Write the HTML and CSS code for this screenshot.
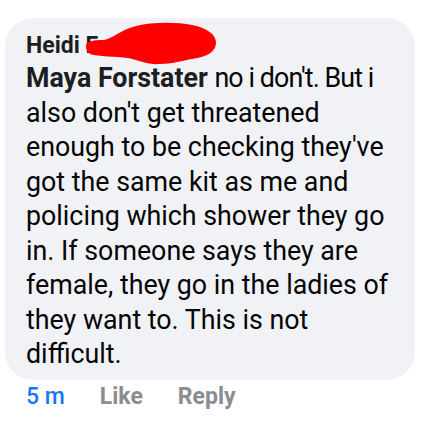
FILE: index.html
```html
<!DOCTYPE html>
<html>
<head>
<meta charset="utf-8">
<link rel="stylesheet" href="styles.css">
</head>
<body>
<div class="page">
  <div class="comment">
    <div class="bubble">
      <div class="name">Heidi F</div>
      <div class="text"><span class="mention">Maya Forstater</span> <span class="tight">no i don't. But i</span><br>also don't get threatened<br>enough to be checking they've<br>got the same kit as me and<br>policing which shower they go<br>in. If someone says they are<br>female, they go in the ladies of<br>they want to. This is not<br>difficult.</div>
      <svg class="redact" width="132" height="44" viewBox="0 0 132 44">
        <path d="M0 24 C0 19 8 18 18 18 C28 16 34 8 50 4 C66 0 90 0 106 3 C122 6 130 13 130 21 C130 30 120 35 106 37 C94 39 86 42 74 42 C62 43 52 38 42 36 C30 34 12 35 4 32 C1 30 0 27 0 24 Z" fill="#ff0000"/>
      </svg>
    </div>
    <div class="actions">
      <span class="time">5 m</span>
      <span class="act">Like</span>
      <span class="act">Reply</span>
    </div>
  </div>
</div>
</body>
</html>
```

FILE: styles.css
```css
html, body {
  margin: 0;
  padding: 0;
  background: #ffffff;
}
.page {
  width: 442px;
  height: 426px;
  padding: 18px 0 0 5px;
  box-sizing: border-box;
  font-family: Roboto, "Noto Sans", sans-serif;
}
.comment {
  display: flex;
  flex-direction: column;
  width: 410px;
}
.bubble {
  position: relative;
  background: #f0f2f5;
  border-radius: 28px;
  padding: 12px 10px 17px 21px;
  height: 362px;
  box-sizing: border-box;
}
.name {
  font-weight: 700;
  font-size: 23px;
  line-height: 31px;
  color: #1c1e21;
}
.text {
  font-size: 26.8px;
  line-height: 34.5px;
  color: #050505;
  white-space: nowrap;
}
.mention {
  font-weight: 700;
  color: #1c1e21;
}
.tight {
  letter-spacing: -0.9px;
}
.redact {
  position: absolute;
  left: 81px;
  top: 4px;
}
.actions {
  display: flex;
  gap: 35px;
  padding: 3px 0 0 21px;
  font-size: 23px;
  line-height: 28px;
  font-weight: 700;
}
.time {
  color: #1877f2;
  font-weight: 500;
}
.act {
  color: #8a8d91;
}
```
